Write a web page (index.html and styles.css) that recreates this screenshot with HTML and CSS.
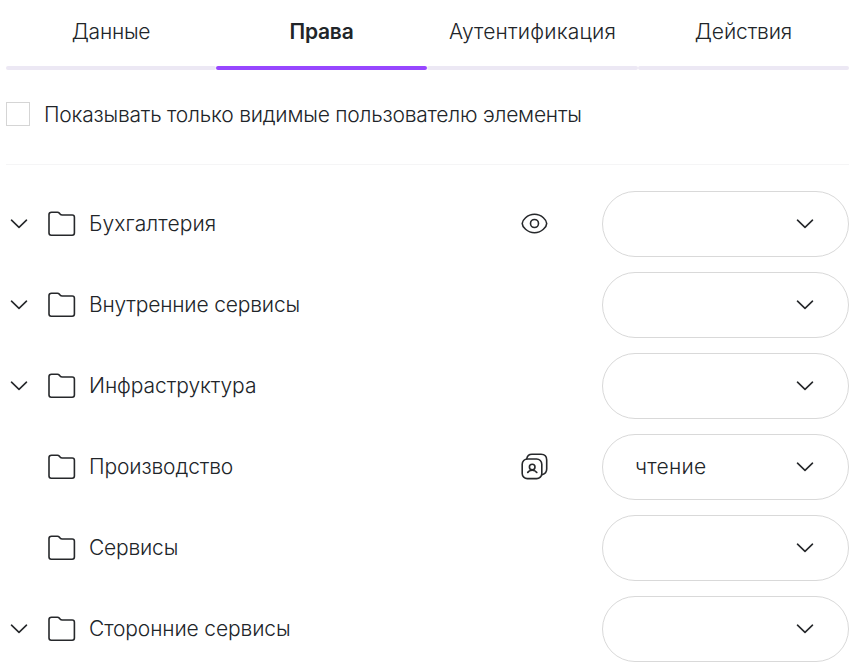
FILE: index.html
```html
<!DOCTYPE html>
<html lang="ru">
<head>
<meta charset="utf-8">
<title>Права</title>
<link rel="stylesheet" href="styles.css">
</head>
<body>
<svg class="defs" aria-hidden="true">
  <symbol id="chevron" viewBox="0 0 18 10"><path d="M1.500 1.200 9 8.400l7.500-7.200"/></symbol>
  <symbol id="folder" viewBox="0 0 28 26"><path d="M1 3.600V22q0 2.200 2.200 2.200H24.200q2.200 0 2.200-2.200V6.200Q26.400 4 24.200 4H14.300Q12.800 4 12 3L11.300 2.100Q10.500 1.200 9.500 1.200H3.500Q1 1.200 1 3.600Z"/></symbol>
  <symbol id="eye" viewBox="0 0 28 22"><path d="M2.200 10.500C2.200 7.500 7.100 1.300 14.500 1.300S26.700 7.500 26.700 10.500 21.900 19.700 14.500 19.700 2.200 13.500 2.200 10.500Z"/><circle cx="14.500" cy="10.500" r="4"/></symbol>
  <symbol id="cards" viewBox="0 0 28 28"><rect x="2.200" y="6" width="19.600" height="19.600" rx="5.200"/><path d="M6.700 5.900Q7.500 1.300 12 1.300H21Q26.700 1.300 26.700 7V16Q26.700 20.500 22 21.700"/><circle cx="12.200" cy="14" r="2.800"/><path d="M7.700 19.500Q9 17.200 12.200 17.200T16.800 19.500"/></symbol>
</svg>
<main class="panel">
  <nav class="tabs">
    <a class="tab"><span class="t-data">Данные</span></a>
    <a class="tab tab-active"><span class="t-rights">Права</span></a>
    <a class="tab"><span class="t-auth">Аутентификация</span></a>
    <a class="tab"><span class="t-actions">Действия</span></a>
  </nav>
  <label class="filter"><span class="checkbox"></span><span class="t-filter">Показывать только видимые пользователю элементы</span></label>
  <section class="tree">
    <div class="row"><svg class="chevron"><use href="#chevron"/></svg><svg class="folder"><use href="#folder"/></svg><span class="name t-acc">Бухгалтерия</span><span class="status"><svg class="eye"><use href="#eye"/></svg></span><div class="select"><span></span><svg class="chevron"><use href="#chevron"/></svg></div></div>
    <div class="row"><svg class="chevron"><use href="#chevron"/></svg><svg class="folder"><use href="#folder"/></svg><span class="name t-int">Внутренние сервисы</span><span class="status"></span><div class="select"><span></span><svg class="chevron"><use href="#chevron"/></svg></div></div>
    <div class="row"><svg class="chevron"><use href="#chevron"/></svg><svg class="folder"><use href="#folder"/></svg><span class="name t-infra">Инфраструктура</span><span class="status"></span><div class="select"><span></span><svg class="chevron"><use href="#chevron"/></svg></div></div>
    <div class="row"><span class="chevron"></span><svg class="folder"><use href="#folder"/></svg><span class="name t-prod">Производство</span><span class="status"><svg class="cards"><use href="#cards"/></svg></span><div class="select"><span class="t-read">чтение</span><svg class="chevron"><use href="#chevron"/></svg></div></div>
    <div class="row"><span class="chevron"></span><svg class="folder"><use href="#folder"/></svg><span class="name t-serv">Сервисы</span><span class="status"></span><div class="select"><span></span><svg class="chevron"><use href="#chevron"/></svg></div></div>
    <div class="row"><svg class="chevron"><use href="#chevron"/></svg><svg class="folder"><use href="#folder"/></svg><span class="name t-ext">Сторонние сервисы</span><span class="status"></span><div class="select"><span></span><svg class="chevron"><use href="#chevron"/></svg></div></div>
  </section>
</main>
</body>
</html>
```
FILE: styles.css
```css
* { box-sizing: border-box; }
body { margin: 0; background: #fff; color: #212529; font: 300 21px/32px Inter, "Liberation Sans", sans-serif; overflow: hidden; }
.defs { display: none; }
svg { display: block; fill: none; stroke: #26282b; stroke-width: 1.6; stroke-linecap: round; stroke-linejoin: round; }
.panel { padding: 0 4px 0 6px; }
.tabs { display: grid; grid-template-columns: 210px repeat(3, 211px); height: 70px; }
.tab { display: flex; flex-direction: column; justify-content: space-between; align-items: center; padding-top: 16px; white-space: nowrap; }
.tab::after { content: ""; width: 100%; height: 4px; border-radius: 2px; background: #ece8f4; }
.tab-active { font-weight: 600; }
.tab-active::after { background: #9747ff; }
.filter { display: flex; align-items: center; height: 95px; padding-bottom: 7px; gap: 14px; border-bottom: 1px solid #f5f5f6; white-space: nowrap; }
.checkbox { width: 24px; height: 24px; border: 1px solid #d5d5d5; }
.tree { display: grid; gap: 15px; padding-top: 26px; }
.row { display: grid; grid-template-columns: 18px 28px 1fr 28px 247px; height: 66px; align-items: center; padding-left: 4px; }
.chevron { width: 18px; height: 10px; }
.folder { width: 28px; height: 26px; margin-left: 20px; }
.name { padding-left: 33px; white-space: nowrap; }
.status { display: flex; justify-content: center; margin-left: -54px; margin-right: 54px; }
.eye { width: 28px; height: 22px; flex: none; }
.cards { width: 28px; height: 28px; flex: none; }
.select { display: flex; justify-content: space-between; align-items: center; height: 66px; padding: 0 34px 0 32px; border: 1px solid #d9d9d9; border-radius: 33px; }

/* Optical tracking per label */
.t-data { letter-spacing: -0.25px; }
.t-rights { letter-spacing: -0.2px; }
.t-auth { letter-spacing: 0.2px; }
.t-actions { letter-spacing: -0.12px; }
.t-filter { letter-spacing: -0.22px; padding-top: 2px; }
.t-acc { letter-spacing: 0.1px; }
.t-int { letter-spacing: -0.17px; }
.t-infra { letter-spacing: -0.06px; }
.t-prod { letter-spacing: -0.12px; }
.t-serv { letter-spacing: -0.2px; }
.t-ext { letter-spacing: -0.13px; }
.t-read { letter-spacing: 0.25px; }
```
